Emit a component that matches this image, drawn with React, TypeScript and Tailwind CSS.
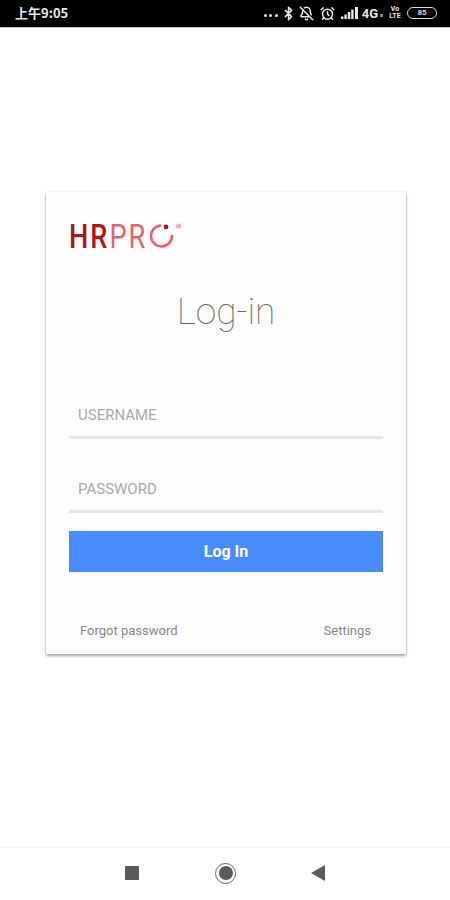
import { Bluetooth, AlarmClock, BellOff } from "lucide-react";

const roboto = { fontFamily: "Roboto, sans-serif" };

function SignalBars() {
  return (
    <svg width="17" height="12" viewBox="0 0 17 12" fill="#e8e8e8">
      <rect x="0" y="9.5" width="2.4" height="2.5" />
      <rect x="3.4" y="7.5" width="2.4" height="4.5" />
      <rect x="6.8" y="5" width="2.4" height="7" />
      <rect x="10.2" y="2.5" width="2.4" height="9.5" />
      <rect x="14" y="0" width="3" height="12" />
    </svg>
  );
}

function Battery() {
  return (
    <div className="flex h-[12px] w-[30px] items-center justify-center rounded-full border-[1.5px] border-[#ddd] text-[8px] font-bold leading-none text-[#ddd]">
      85
    </div>
  );
}

function StatusBar() {
  return (
    <div className="flex h-[28px] shrink-0 items-center justify-between border-b border-b-[#c4c4c4] bg-black pl-[15px] pr-[13px] pb-[1px] text-[#e8e8e8]">
      <span className="text-[13px] font-bold" style={{ fontFamily: "'Noto Sans CJK SC', Roboto, sans-serif" }}>
        上午9:05
      </span>
      <div className="flex items-center">
        <span className="mr-[3px] mt-[5px] flex gap-[2.5px]">
          <i className="size-[3px] rounded-full bg-[#e8e8e8]" />
          <i className="size-[3px] rounded-full bg-[#e8e8e8]" />
          <i className="size-[3px] rounded-full bg-[#e8e8e8]" />
        </span>
        <Bluetooth size={15} strokeWidth={2.4} className="mr-[3px]" />
        <BellOff size={15} strokeWidth={2.4} className="mr-[6px]" />
        <AlarmClock size={15} strokeWidth={2.4} className="mr-[6px]" />
        <SignalBars />
        <span className="ml-[4px] text-[13px] font-bold leading-none" style={roboto}>
          4G
        </span>
        <i className="ml-[2px] mr-[5px] mt-[5px] size-[3px] bg-[#888]" />
        <span className="mr-[5px] flex w-[14px] flex-col items-center text-[7px] font-bold leading-[7px]" style={roboto}>
          <span>Vo</span>
          <span>LTE</span>
        </span>
        <Battery />
      </div>
    </div>
  );
}

function Logo() {
  return (
    <div className="flex h-[26px] items-center" style={roboto}>
      <div className="flex w-[106px] origin-left scale-x-[0.8] text-[34px] leading-none tracking-[2.5px]">
        <span className="font-medium text-[#b01420]">HR</span>
        <span className="font-normal text-[#e8606c]">PR</span>
      </div>
      <svg width="36" height="28" viewBox="0 0 36 28" className="ml-[-25px] mt-[-2px]" fill="none">
        <path d="M10 4.6 A10.5 10.5 0 1 0 22 15" stroke="#e8606c" strokeWidth="2.6" strokeLinecap="round" />
        <circle cx="16" cy="6" r="2.4" fill="#b01420" />
        <circle cx="28.5" cy="5" r="2.6" fill="#eeb0b4" />
      </svg>
    </div>
  );
}

function Field({ label }: { label: string }) {
  return (
    <div className="flex h-[34px] items-start border-b-[3px] border-b-[#e6e6e6] pl-[9px] text-[15px] leading-[20px] text-[#aaaaaa]">
      {label}
    </div>
  );
}

export default function App() {
  return (
    <div className="flex h-[900px] w-[450px] flex-col bg-white" style={roboto}>
      <StatusBar />
      <main className="flex-1 pl-[46px] pt-[164px]">
        <section className="flex h-[462px] w-[360px] flex-col bg-[#fdfdfd] px-[23px] pt-[31px] shadow-[0_2px_3px_rgba(0,0,0,0.35),0_0_2px_rgba(0,0,0,0.1)]">
          <Logo />
          <h1 className="mt-[39px] text-center text-[37px] font-thin leading-[48px] text-[#666]">Log-in</h1>
          <div className="mt-[69px]">
            <Field label="USERNAME" />
          </div>
          <div className="mt-[40px]">
            <Field label="PASSWORD" />
          </div>
          <button className="mt-[18px] h-[41px] w-full bg-[#4a8cff] text-[16px] font-bold text-white">Log In</button>
          <div className="mt-[51px] flex justify-between pl-[11px] pr-[12px] text-[13px] font-normal leading-[16px] text-[#888]">
            <span>Forgot password</span>
            <span>Settings</span>
          </div>
        </section>
      </main>
      <nav className="flex h-[53px] shrink-0 items-center border-t border-t-[#f5f5f5] pl-[125px] pb-[2px]">
        <span className="size-[14px] rounded-[1px] bg-[#5a5a5a]" />
        <span className="ml-[76px] flex size-[21px] items-center justify-center rounded-full border-[1.5px] border-[#666]">
          <span className="size-[14px] rounded-full bg-[#5a5a5a]" />
        </span>
        <svg width="14" height="16" viewBox="0 0 14 16" className="ml-[75px]">
          <path d="M14 0 V16 L0 8 Z" fill="#5a5a5a" />
        </svg>
      </nav>
    </div>
  );
}
